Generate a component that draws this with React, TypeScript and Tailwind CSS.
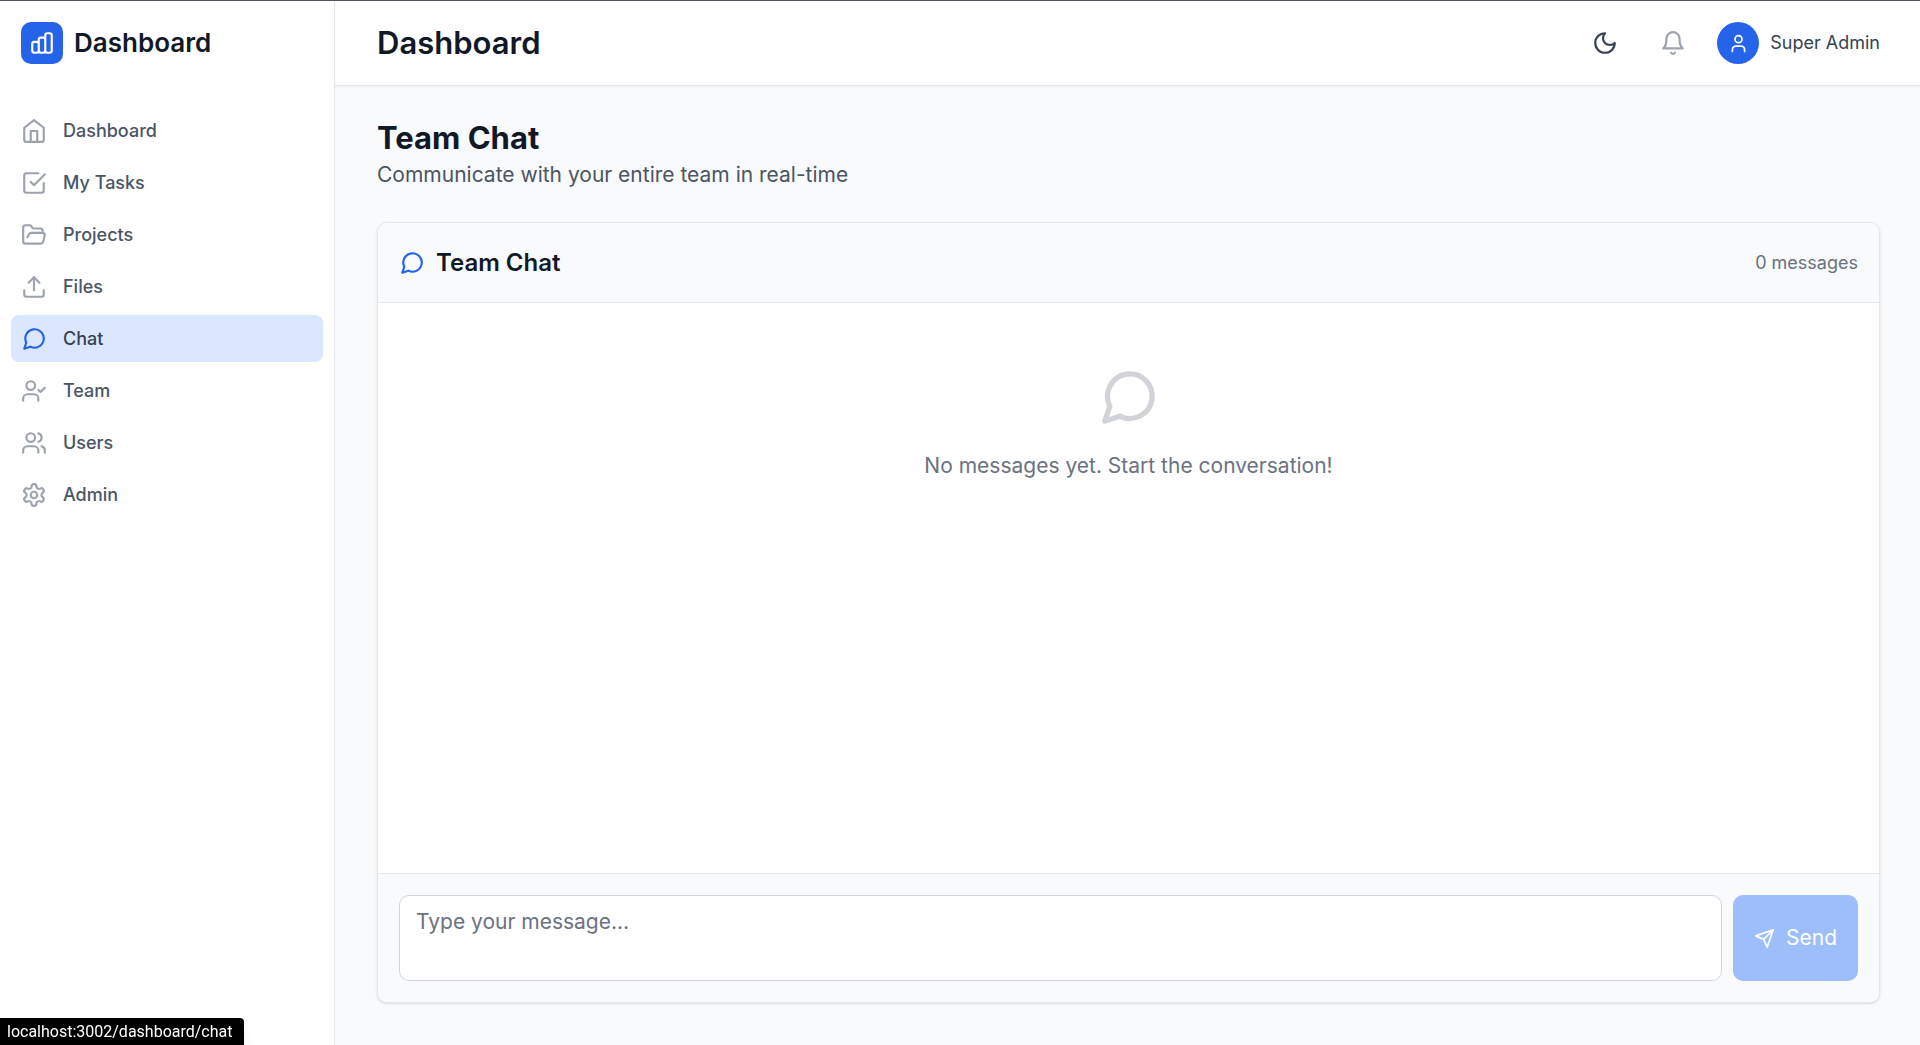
import { useState } from 'react';
import type { ReactNode } from 'react';
import { FolderOpen, Upload, User, UserCheck, Users } from 'lucide-react';

type IconProps = { className?: string };

function Icon({ className, children }: { className?: string; children: ReactNode }) {
  return (
    <svg viewBox="0 0 24 24" fill="none" stroke="currentColor" strokeWidth={2} strokeLinecap="round" strokeLinejoin="round" className={className} aria-hidden="true">
      {children}
    </svg>
  );
}

function HomeIcon({ className }: IconProps) {
  return (
    <Icon className={className}>
      <path d="m3 9 9-7 9 7v11a2 2 0 0 1-2 2H5a2 2 0 0 1-2-2z" />
      <path d="M9 22V12h6v10" />
    </Icon>
  );
}

function TaskIcon({ className }: IconProps) {
  return (
    <Icon className={className}>
      <path d="m9 11 3 3L22 4" />
      <path d="M21 12v7a2 2 0 0 1-2 2H5a2 2 0 0 1-2-2V5a2 2 0 0 1 2-2h11" />
    </Icon>
  );
}

function ChatIcon({ className }: IconProps) {
  return (
    <Icon className={className}>
      <path d="m3 21 1.9-5.7a8.5 8.5 0 1 1 3.8 3.8z" />
    </Icon>
  );
}

function GearIcon({ className }: IconProps) {
  return (
    <Icon className={className}>
      <path d="M12.22 2h-.44a2 2 0 0 0-2 2v.18a2 2 0 0 1-1 1.73l-.43.25a2 2 0 0 1-2 0l-.15-.08a2 2 0 0 0-2.73.73l-.22.38a2 2 0 0 0 .73 2.73l.15.1a2 2 0 0 1 1 1.72v.51a2 2 0 0 1-1 1.74l-.15.09a2 2 0 0 0-.73 2.73l.22.38a2 2 0 0 0 2.73.73l.15-.08a2 2 0 0 1 2 0l.43.25a2 2 0 0 1 1 1.73V20a2 2 0 0 0 2 2h.44a2 2 0 0 0 2-2v-.18a2 2 0 0 1 1-1.73l.43-.25a2 2 0 0 1 2 0l.15.08a2 2 0 0 0 2.73-.73l.22-.39a2 2 0 0 0-.73-2.73l-.15-.08a2 2 0 0 1-1-1.74v-.5a2 2 0 0 1 1-1.74l.15-.09a2 2 0 0 0 .73-2.73l-.22-.38a2 2 0 0 0-2.73-.73l-.15.08a2 2 0 0 1-2 0l-.43-.25a2 2 0 0 1-1-1.73V4a2 2 0 0 0-2-2z" />
      <circle cx="12" cy="12" r="3" />
    </Icon>
  );
}

function LogoIcon({ className }: IconProps) {
  return (
    <Icon className={className}>
      <path d="M9 19v-6a2 2 0 0 0-2-2H5a2 2 0 0 0-2 2v6a2 2 0 0 0 2 2h2a2 2 0 0 0 2-2zm0 0V9a2 2 0 0 1 2-2h2a2 2 0 0 1 2 2v10m-6 0a2 2 0 0 0 2 2h2a2 2 0 0 0 2-2m0 0V5a2 2 0 0 1 2-2h2a2 2 0 0 1 2 2v14a2 2 0 0 1-2 2h-2a2 2 0 0 1-2-2z" />
    </Icon>
  );
}

function MoonIcon({ className }: IconProps) {
  return (
    <Icon className={className}>
      <path d="M12 3a6 6 0 0 0 9 9 9 9 0 1 1-9-9Z" />
    </Icon>
  );
}

function BellIcon({ className }: IconProps) {
  return (
    <Icon className={className}>
      <path d="M6 8a6 6 0 0 1 12 0c0 7 3 9 3 9H3s3-2 3-9" />
      <path d="M10.3 21a1.94 1.94 0 0 0 3.4 0" />
    </Icon>
  );
}

function SendIcon({ className }: IconProps) {
  return (
    <Icon className={className}>
      <path d="m22 2-7 20-4-9-9-4Z" />
      <path d="M22 2 11 13" />
    </Icon>
  );
}

const navigation = [
  { name: 'Dashboard', href: '#dashboard', icon: HomeIcon },
  { name: 'My Tasks', href: '#tasks', icon: TaskIcon },
  { name: 'Projects', href: '#projects', icon: FolderOpen },
  { name: 'Files', href: '#files', icon: Upload },
  { name: 'Chat', href: '#chat', icon: ChatIcon },
  { name: 'Team', href: '#team', icon: UserCheck },
  { name: 'Users', href: '#users', icon: Users },
  { name: 'Admin', href: '#admin', icon: GearIcon },
];

export default function App() {
  const [active, setActive] = useState('Chat');
  const [message, setMessage] = useState('');

  return (
    <div className="flex min-h-screen border-t border-[#555560] bg-[#f9fafb] font-[Inter,sans-serif] text-[21px] leading-8 text-[#111827]">
      {/* Sidebar */}
      <aside className="flex w-[335px] shrink-0 flex-col border-r border-[#e5e7eb] bg-white">
        <div className="flex h-[84px] items-center gap-[11px] px-[21px]">
          <div className="flex size-[42px] items-center justify-center rounded-[10px] bg-[#2563eb] text-white">
            <LogoIcon className="size-[26px]" />
          </div>
          <span className="text-[26px] font-semibold">Dashboard</span>
        </div>
        <nav className="mt-[22px] flex flex-col gap-[5px] px-[11px]">
          {navigation.map(item => (
            <a
              key={item.name}
              href={item.href}
              onClick={() => setActive(item.name)}
              className={`flex h-[47px] items-center gap-4 rounded-lg px-[10px] text-lg font-medium ${active === item.name ? 'bg-[#dbe7fe] text-[#374151]' : 'text-[#4b5563] hover:bg-gray-50'}`}
            >
              <item.icon className={`size-[26px] shrink-0 ${active === item.name ? 'text-[#2563eb]' : 'text-[#9ca3af]'}`} />
              {item.name}
            </a>
          ))}
        </nav>
      </aside>

      <div className="flex min-w-0 flex-1 flex-col">
        {/* Top bar */}
        <header className="flex h-[85px] shrink-0 items-center justify-between border-b border-[#e5e7eb] bg-white pr-10 pl-[42px] shadow-xs">
          <h1 className="text-[31px] font-semibold">Dashboard</h1>
          <div className="flex items-center gap-[21px]">
            <button aria-label="Toggle theme" className="flex size-[47px] items-center justify-center rounded-lg text-[#374151]">
              <MoonIcon className="size-[26px]" />
            </button>
            <button aria-label="Notifications" className="flex size-[47px] items-center justify-center rounded-lg text-[#9ca3af]">
              <BellIcon className="size-[26px]" />
            </button>
            <div className="flex items-center gap-[11px]">
              <div className="flex size-[42px] items-center justify-center rounded-full bg-[#2563eb] text-white">
                <User className="size-[21px]" />
              </div>
              <span className="text-lg text-[#374151]">Super Admin</span>
            </div>
          </div>
        </header>

        <main className="flex flex-1 flex-col pt-[31px] pr-10 pb-[42px] pl-[42px]">
          <h2 className="text-[31px] leading-[42px] font-bold">Team Chat</h2>
          <p className="text-[#4b5563]">Communicate with your entire team in real-time</p>

          {/* Chat panel */}
          <section className="mt-[31px] flex flex-1 flex-col overflow-hidden rounded-[10px] border border-[#e5e7eb] bg-white shadow-sm">
            <div className="flex h-20 items-center justify-between border-b border-[#e5e7eb] bg-[#f9fafb] px-[21px]">
              <div className="flex items-center gap-[11px]">
                <ChatIcon className="size-[26px] text-[#2563eb]" />
                <h3 className="text-[24px] font-semibold">Team Chat</h3>
              </div>
              <span className="text-lg text-[#6b7280]">0 messages</span>
            </div>

            <div className="flex flex-1 flex-col items-center pt-[63px] text-[#6b7280]">
              <ChatIcon className="size-[63px] text-[#d1d3d8]" />
              <p className="mt-[21px]">No messages yet. Start the conversation!</p>
            </div>

            <form onSubmit={e => e.preventDefault()} className="flex gap-[11px] border-t border-[#e5e7eb] bg-[#f9fafb] p-[21px]">
              <textarea
                aria-label="Message"
                rows={2}
                value={message}
                onChange={e => setMessage(e.target.value)}
                placeholder="Type your message..."
                className="h-[86px] min-w-0 flex-1 resize-none rounded-[10px] border border-[#d1d5db] bg-white px-4 py-[10px] placeholder:text-[#6b7280] focus:outline-none"
              />
              <button type="submit" disabled={!message.trim()} className="flex items-center gap-[11px] rounded-[10px] bg-[#2563eb] px-[21px] text-white disabled:bg-[#9dbefb]">
                <SendIcon className="size-[21px]" />
                Send
              </button>
            </form>
          </section>
        </main>
      </div>

      <div className="fixed bottom-0 left-0 rounded-tr-sm bg-black pr-[11px] pl-[7px] font-[Roboto,sans-serif] text-base leading-[27px] text-white shadow-lg">
        localhost:3002/dashboard/chat
      </div>
    </div>
  );
}
